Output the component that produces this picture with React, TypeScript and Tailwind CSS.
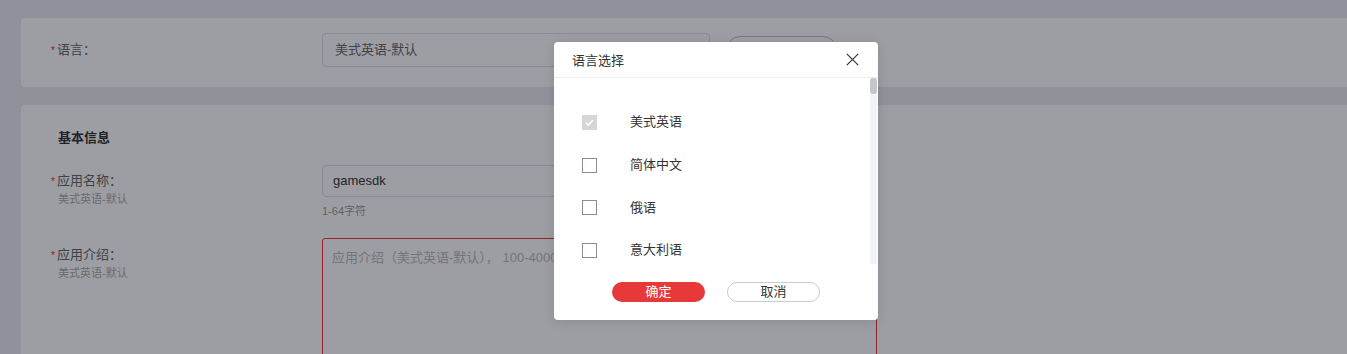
import React from "react";

const font = { fontFamily: '"Liberation Sans", "Noto Sans CJK SC", sans-serif' };

const languages = ["美式英语", "简体中文", "俄语", "意大利语"];

function Star() {
  return <span className="text-[#f5222d] text-[10px] leading-[20px] mr-[2px] relative top-[1px]">*</span>;
}

function Checkbox({ checked, disabled }: { checked?: boolean; disabled?: boolean }) {
  if (checked && disabled) {
    return (
      <span className="w-[15px] h-[15px] bg-[#d6d6d8] flex items-center justify-center shrink-0">
        <svg width="11" height="11" viewBox="0 0 11 11">
          <polyline points="2,5.8 4.4,8 9,3" fill="none" stroke="#ffffff" strokeWidth="1.6" />
        </svg>
      </span>
    );
  }
  return <span className="w-[15px] h-[15px] border border-[#8a8d94] bg-white shrink-0" />;
}

export default function App() {
  return (
    <div style={font} className="relative h-[354px] w-full overflow-hidden bg-[#e8ebf2]">
      <div className="pt-[18px] pl-[21px] flex flex-col gap-[18px]">
        {/* Card 1 */}
        <div className="w-[1400px] bg-white rounded-[4px] pt-[15px] pb-[20px] pl-[30px] flex items-center">
          <div className="w-[271px] flex items-center text-[13px] leading-[20px] text-[#666]">
            <Star />
            <span>语言：</span>
          </div>
          <div className="w-[388px] h-[34px] border border-[#dcdfe6] rounded-[4px] flex items-center pl-[12px] text-[13px] text-[#666]">
            美式英语-默认
          </div>
          <div className="ml-[16px] w-[111px] h-[28px] border border-[#b8bcc8] rounded-full" />
        </div>

        {/* Card 2 */}
        <div className="w-[1400px] bg-white rounded-[4px] pt-[23px] pl-[30px] h-[400px]">
          <div className="pl-[7px] text-[13px] leading-[20px] font-bold text-[#333]">基本信息</div>
          <div className="mt-[17px] flex">
            <div className="w-[271px] pt-[6px]">
              <div className="flex items-center text-[13px] leading-[20px] text-[#666]">
                <Star />
                <span>应用名称：</span>
              </div>
              <div className="pl-[7px] text-[11px] leading-[16px] text-[#aaa]">美式英语-默认</div>
            </div>
            <div>
              <div className="w-[555px] h-[32px] border border-[#dcdfe6] rounded-[4px] flex items-center pl-[10px] text-[13px] text-[#333]">
                gamesdk
              </div>
              <div className="mt-[6px] text-[11px] leading-[16px] text-[#999]">1-64字符</div>
            </div>
          </div>
          <div className="mt-[19px] flex">
            <div className="w-[271px] pt-[7px]">
              <div className="flex items-center text-[13px] leading-[20px] text-[#666]">
                <Star />
                <span>应用介绍：</span>
              </div>
              <div className="pl-[7px] text-[11px] leading-[16px] text-[#aaa]">美式英语-默认</div>
            </div>
            <div className="w-[555px] h-[140px] border border-[#f0323a] rounded-[3px] pl-[9px] pt-[9px] text-[13px] leading-[20px] text-[#bbb]">
              应用介绍（美式英语-默认）， 100-4000字符
            </div>
          </div>
        </div>
      </div>

      {/* Overlay */}
      <div className="absolute inset-0 bg-[rgba(10,12,25,0.4)]">
        <div className="absolute left-[554px] top-[42px] w-[324px] bg-white rounded-[4px] shadow-[0_2px_12px_rgba(0,0,0,0.12)] flex flex-col">
          <div className="h-[36px] flex items-center justify-between pl-[18px] pr-[19px] border-b border-[#f0f0f2]">
            <span className="text-[13px] leading-[20px] text-[#333] relative top-[1px]">语言选择</span>
            <svg width="13" height="13" viewBox="0 0 13 13">
              <path d="M0.8 0.8 L12.2 12.2 M12.2 0.8 L0.8 12.2" stroke="#333" strokeWidth="1.2" fill="none" />
            </svg>
          </div>
          <div className="h-[186px] flex">
            <div className="flex-1 overflow-hidden pt-[23px] pl-[28px]">
              {languages.map((l, i) => (
                <div key={l} className="h-[42.7px] flex items-center">
                  <Checkbox checked={i === 0} disabled={i === 0} />
                  <span className="ml-[33px] text-[13px] leading-[20px] text-[#333]">{l}</span>
                </div>
              ))}
            </div>
            <div className="w-[7px] mr-[1px] bg-[#f2f3f6] flex flex-col">
              <div className="h-[16px] bg-[#c4c6ca] rounded-[3px]" />
            </div>
          </div>
          <div className="h-[56px] flex items-center justify-center gap-[22px]">
            <button className="w-[93px] h-[20px] rounded-full bg-[#e8393a] text-white text-[13px] leading-[18px]">确定</button>
            <button className="w-[93px] h-[20px] rounded-full border border-[#c8cad2] bg-white text-[#333] text-[13px] leading-[18px]">取消</button>
          </div>
        </div>
      </div>
    </div>
  );
}
